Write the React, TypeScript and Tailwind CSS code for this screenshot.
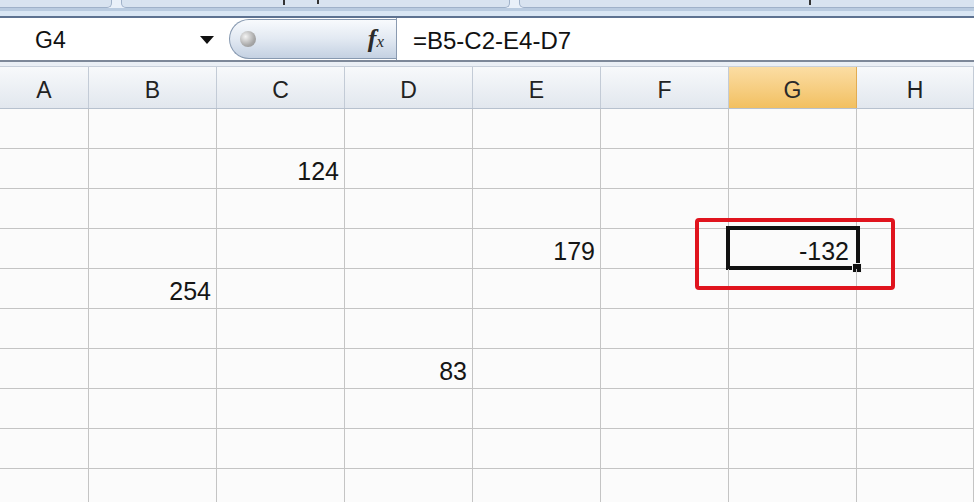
const columns = ["A", "B", "C", "D", "E", "F", "G", "H"]

// row index -> column letter -> value
const values: Record<number, Record<string, string>> = {
  2: { C: "124" },
  4: { E: "179", G: "-132" },
  5: { B: "254" },
  7: { D: "83" }
}

const rows = [1, 2, 3, 4, 5, 6, 7, 8, 9, 10]

function TopStrip() {
  return (
    <div className="h-[18px] flex flex-col bg-[#e4edf8]">
      <div className="h-[8px] flex gap-[9px] bg-[#e9f0f9]">
        <div className="w-[116px] -ml-[4px] border border-t-0 border-[#9fb1c9] rounded-b-[5px] bg-[#d8e3f0]" />
        <div className="w-[389px] border border-t-0 border-[#9fb1c9] rounded-b-[5px] bg-[#d8e3f0] relative">
          <div className="absolute left-[161px] top-0 w-[2px] h-[5px] bg-[#333]" />
          <div className="absolute left-[195px] top-0 w-[2px] h-[4px] bg-[#333]" />
        </div>
        <div className="flex-1 -mr-[4px] border border-t-0 border-[#9fb1c9] rounded-b-[5px] bg-[#d8e3f0] relative">
          <div className="absolute left-[289px] top-0 w-[2px] h-[5px] bg-[#333]" />
        </div>
      </div>
      <div className="h-[3px] bg-[#b9cbe0]" />
      <div className="flex-1 bg-[#d9e6f4]" />
      <div className="h-[2px] bg-[#5d7291]" />
    </div>
  )
}

function FormulaBar() {
  return (
    <div className="h-[44px] flex bg-white border-b-[2px] border-[#7d8899] font-['Liberation_Sans',Arial,sans-serif] text-[#111]">
      <div className="w-[229px] flex items-center pt-[3px]">
        <span className="ml-[35px] text-[23px] leading-none">G4</span>
        <div className="ml-auto mr-[15px] mt-[-2px] w-0 h-0 border-l-[7px] border-r-[7px] border-t-[8px] border-l-transparent border-r-transparent border-t-[#111]" />
      </div>
      <div className="w-[167px] my-[1px] flex items-center rounded-l-full border border-r-0 border-[#8799b0] bg-gradient-to-b from-[#f8fafd] via-[#e2e9f2] to-[#c4d1e2]">
        <div className="ml-[10px] w-[16px] h-[16px] rounded-full bg-[radial-gradient(circle_at_35%_35%,#f4f4f4,#a9a9a9_60%,#8a8a8a)]" />
        <span className="ml-auto mr-[12px] font-['Liberation_Serif',serif] italic font-bold text-[#2b2b2b] text-[26px] leading-none">
          f<span className="text-[17px] font-normal italic">x</span>
        </span>
      </div>
      <div className="w-[1px] bg-[#8a9ab0]" />
      <div className="flex-1 flex items-center pt-[3px] pl-[16px]">
        <span className="text-[24px] leading-none">=B5-C2-E4-D7</span>
      </div>
    </div>
  )
}

function HeaderRow() {
  return (
    <div className="h-[42px] grid grid-cols-[89px_repeat(6,128px)_1fr] border-b border-[#b7c1ce] font-['Liberation_Sans',Arial,sans-serif]">
      {columns.map((c) => {
        const active = c === "G"
        return (
          <div
            key={c}
            className={
              active
                ? "flex items-center justify-center pt-[6px] border-r border-[#e2ac52] bg-gradient-to-b from-[#fbdda3] to-[#f2c060] text-[#2a2a2a]"
                : "flex items-center justify-center pt-[6px] border-r border-[#c3cbd6] bg-gradient-to-b from-[#f7f9fb] to-[#e2e7ee] text-[#222]"
            }>
            <span className="text-[23px] leading-none">{c}</span>
          </div>
        )
      })}
    </div>
  )
}

function Grid() {
  return (
    <div className="font-['Liberation_Sans',Arial,sans-serif] text-[#151515]">
      {rows.map((r) => (
        <div
          key={r}
          className="h-[40px] grid grid-cols-[89px_repeat(6,128px)_1fr] border-b border-[#c4c4c4]">
          {columns.map((c) => {
            const v = values[r]?.[c]
            const selected = r === 4 && c === "G"
            return (
              <div
                key={c}
                className="relative border-r border-[#c4c4c4] flex items-end justify-end pb-[4px] pr-[5px]">
                {selected && (
                  <>
                    <div className="absolute -left-[3px] -top-[3px] -right-[4px] -bottom-[2px] border-[4px] border-[#111]" />
                    <div className="absolute -right-[6px] -bottom-[5px] w-[10px] h-[10px] bg-[#111] border border-[#f4f4f4]" />
                  </>
                )}
                {v && (
                  <span className={selected ? "text-[25px] leading-none pr-[2px] relative" : "text-[25px] leading-none"}>
                    {v}
                  </span>
                )}
              </div>
            )
          })}
        </div>
      ))}
    </div>
  )
}

export default function App() {
  return (
    <div className="relative w-[974px] h-[502px] overflow-hidden bg-[#fbfbfb]">
      <TopStrip />
      <FormulaBar />
      <div className="h-[5px] bg-[#eaeff5] border-b border-[#c8d0db]" />
      <HeaderRow />
      <Grid />
      {/* red annotation around the selected cell */}
      <div className="absolute left-[695px] top-[218px] w-[200px] h-[72px] border-[4px] border-[#e0141e] rounded-[4px]" />
    </div>
  )
}
